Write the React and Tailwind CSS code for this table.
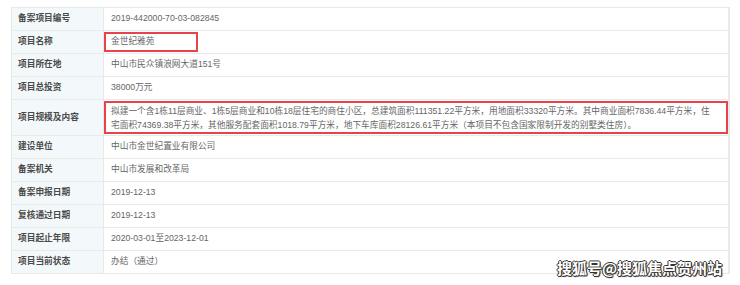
const rows = [
  { label: "备案项目编号", value: "2019-442000-70-03-082845" },
  { label: "项目名称", value: "金世纪雅苑", box: "name" },
  { label: "项目所在地", value: "中山市民众镇浪网大道151号" },
  { label: "项目总投资", value: "38000万元" },
  {
    label: "项目规模及内容",
    lines: [
      "拟建一个含1栋11层商业、1栋5层商业和10栋18层住宅的商住小区，总建筑面积111351.22平方米，用地面积33320平方米。其中商业面积7836.44平方米，住",
      "宅面积74369.38平方米，其他服务配套面积1018.79平方米，地下车库面积28126.61平方米（本项目不包含国家限制开发的别墅类住房）。",
    ],
    box: "full",
  },
  { label: "建设单位", value: "中山市金世纪置业有限公司" },
  { label: "备案机关", value: "中山市发展和改革局" },
  { label: "备案申报日期", value: "2019-12-13" },
  { label: "复核通过日期", value: "2019-12-13" },
  { label: "项目起止年限", value: "2020-03-01至2023-12-01" },
  { label: "项目当前状态", value: "办结（通过）" },
];

function Value({ row }) {
  if (row.box === "name") {
    return (
      <div className="flex h-full items-center">
        <span className="flex h-[20px] w-[94px] items-center border-2 border-[#e8434b] pl-[5px]">{row.value}</span>
      </div>
    );
  }
  if (row.box === "full") {
    return (
      <div className="flex h-full flex-col justify-center border-2 border-[#e8434b] pl-[5px] leading-[14px]">
        {row.lines.map((l, i) => (
          <div key={i} className="whitespace-nowrap">{l}</div>
        ))}
      </div>
    );
  }
  return <div className="flex h-full items-center pl-[7px]">{row.value}</div>;
}

export default function App() {
  return (
    <div
      className="relative h-[285px] w-[740px] overflow-hidden bg-white pl-[11px] pt-[7px] text-[8.7px] text-[#666]"
      style={{ fontFamily: '"Liberation Sans", "Noto Sans CJK SC", sans-serif' }}
    >
      <div className="w-[719px] border-t border-r-2 border-l border-[#e9e9e9]">
        {rows.map((row, i) => (
          <div
            key={i}
            className={`grid grid-cols-[92px_1fr] border-b border-[#e9e9e9] ${row.box === "full" ? "h-[36px]" : "h-[23px]"}`}
          >
            <div className="flex items-center border-r border-[#e9e9e9] bg-[#f3f9fa] pl-[6px] font-bold text-[#4a4a4a]">
              {row.label}
            </div>
            <div className={row.box === "full" ? "py-[1px]" : ""}>
              <Value row={row} />
            </div>
          </div>
        ))}
      </div>
      <div
        className="absolute right-[18px] bottom-[6px] text-[15px] font-bold text-white [text-shadow:1px_0_0_#333,-1px_0_0_#333,0_1px_0_#333,0_-1px_0_#333,1px_1px_1px_#222]"
        style={{ fontFamily: '"Noto Sans CJK SC", sans-serif' }}
      >
        搜狐号@搜狐焦点贺州站
      </div>
    </div>
  );
}
